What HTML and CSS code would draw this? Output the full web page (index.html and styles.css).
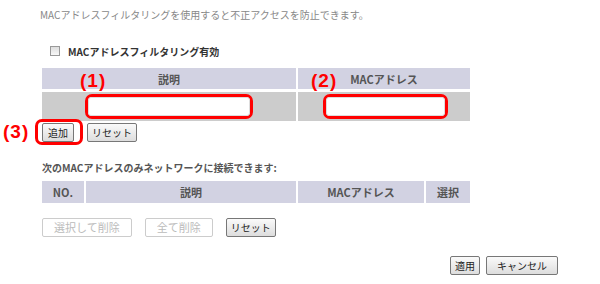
FILE: index.html
```html
<!DOCTYPE html>
<html lang="ja">
<head>
  <meta charset="UTF-8">
  <title>MACアドレスフィルタリング</title>
  <link rel="stylesheet" href="styles.css">
</head>
<body>
  <div class="page">
    <p class="intro">MACアドレスフィルタリングを使用すると不正アクセスを防止できます。</p>

    <label class="enable"><input type="checkbox" class="check"> MACアドレスフィルタリング有効</label>

    <table class="grid entry">
      <tr>
        <th class="c-desc"><span class="note note-1">(1)</span>説明</th>
        <th class="c-mac"><span class="note note-2">(2)</span>MACアドレス</th>
      </tr>
      <tr>
        <td class="c-desc"><span class="mark"><input type="text" class="field field-desc"></span></td>
        <td class="c-mac"><span class="mark"><input type="text" class="field field-mac"></span></td>
      </tr>
    </table>

    <div class="btns btns-add">
      <span class="mark-btn"><span class="note note-3">(3)</span><button class="btn btn-add">追加</button></span>
      <button class="btn">リセット</button>
    </div>

    <p class="subtitle">次のMACアドレスのみネットワークに接続できます:</p>

    <table class="grid list">
      <tr>
        <th class="c-no">NO.</th>
        <th class="c-ldesc">説明</th>
        <th class="c-lmac">MACアドレス</th>
        <th class="c-sel">選択</th>
      </tr>
    </table>

    <div class="btns btns-list">
      <button class="btn btn-wide" disabled>選択して削除</button>
      <button class="btn btn-wide" disabled>全て削除</button>
      <button class="btn">リセット</button>
    </div>
  </div>

  <div class="footer">
    <button class="btn btn-apply">適用</button>
    <button class="btn btn-cancel">キャンセル</button>
  </div>
</body>
</html>
```

FILE: styles.css
```css
body {
  margin: 0;
  background: #fff;
  font-family: "Noto Sans CJK JP", "Noto Sans", sans-serif;
  font-size: 10px;
  color: #555;
}
.page {
  width: 428px;
  padding-left: 42px;
}
.intro {
  margin: 8px 0 0 -2px;
  line-height: 14px;
  color: #888;
}
.enable {
  display: flex;
  align-items: center;
  margin: 22px 0 0 8px;
  height: 14px;
  font-weight: bold;
  color: #333;
}
.check {
  appearance: none;
  width: 10px;
  height: 10px;
  margin: 0 8px 0 0;
  border: 1px solid #999;
  background: linear-gradient(#ddd, #f8f8f8);
}

/* tables */
.grid {
  border-collapse: separate;
  border-spacing: 0;
  width: 428px;
  table-layout: fixed;
}
.grid th, .grid td {
  box-sizing: border-box;
  padding: 0;
  border-right: 2px solid #fff;
}
.grid th:last-child, .grid td:last-child {
  border-right: 0;
}
.grid th {
  background: #d2d2e2;
  color: #555;
  font-size: 11px;
  font-weight: bold;
  height: 21px;
  position: relative;
}
.grid td {
  background: #ccc;
  height: 32px;
  border-top: 3px solid #fff;
  text-align: center;
}
.entry {
  margin-top: 10px;
}
.entry .c-desc { width: 256px; }
.entry .c-mac { width: 172px; }

.list {
  margin-top: 6px;
}
.list th { height: 22px; }
.list .c-no { width: 44px; }
.list .c-ldesc { width: 212px; }
.list .c-lmac { width: 128px; }
.list .c-sel { width: 44px; }

/* red annotations */
.note {
  position: absolute;
  color: #f00;
  font-family: "Liberation Sans", Arial, sans-serif;
  font-size: 19px;
  font-weight: bold;
  line-height: 18px;
  letter-spacing: 1px;
}
.note-1 { left: 38px; top: 4px; }
.note-2 { left: 13px; top: 4px; }
.note-3 { left: -39px; top: 0; }

.mark {
  display: inline-block;
  border: 3px solid #f00;
  border-radius: 7px;
  line-height: 0;
  vertical-align: middle;
}
.field {
  box-sizing: border-box;
  height: 19px;
  margin: 0;
  padding: 0;
  border: 1px solid #ddd;
  border-radius: 3px;
  background: #fff;
}
.field-desc { width: 162px; }
.entry .c-desc .mark { margin-left: -1px; }
.field-mac { width: 119px; }
.entry .c-mac .mark { margin-left: 3px; }

/* buttons */
.btns {
  display: flex;
  align-items: center;
  gap: 13px;
}
.btns-add {
  margin-top: 2px;
}
.btns-list {
  margin-top: 15px;
}
.btn {
  height: 19px;
  padding: 0 4px;
  margin: 0;
  font-family: "Noto Sans CJK JP", sans-serif;
  font-size: 10px;
  line-height: 15px;
  color: #222;
  border: 1px solid #777;
  border-radius: 2px;
  background: linear-gradient(#fafafa, #ddd);
}
.btn:disabled {
  font-size: 11px;
  color: #bbb;
  border-color: #ccc;
  background: #fff;
  padding: 0 11px;
}
.btn-add { padding: 0 5px; }
.mark-btn {
  position: relative;
  display: inline-block;
  line-height: 0;
}
.mark-btn::after {
  content: "";
  position: absolute;
  left: -7px;
  top: -4px;
  width: 42px;
  height: 20px;
  border: 3px solid #f00;
  border-radius: 7px;
}
.subtitle {
  margin: 19px 0 0;
  line-height: 14px;
  font-weight: bold;
  color: #555;
}
.footer {
  display: flex;
  justify-content: flex-end;
  gap: 6px;
  padding-right: 42px;
  margin-top: 19px;
}
.btn-apply {
  width: 30px;
  padding: 0;
}
.btn-cancel {
  width: 72px;
}
```
